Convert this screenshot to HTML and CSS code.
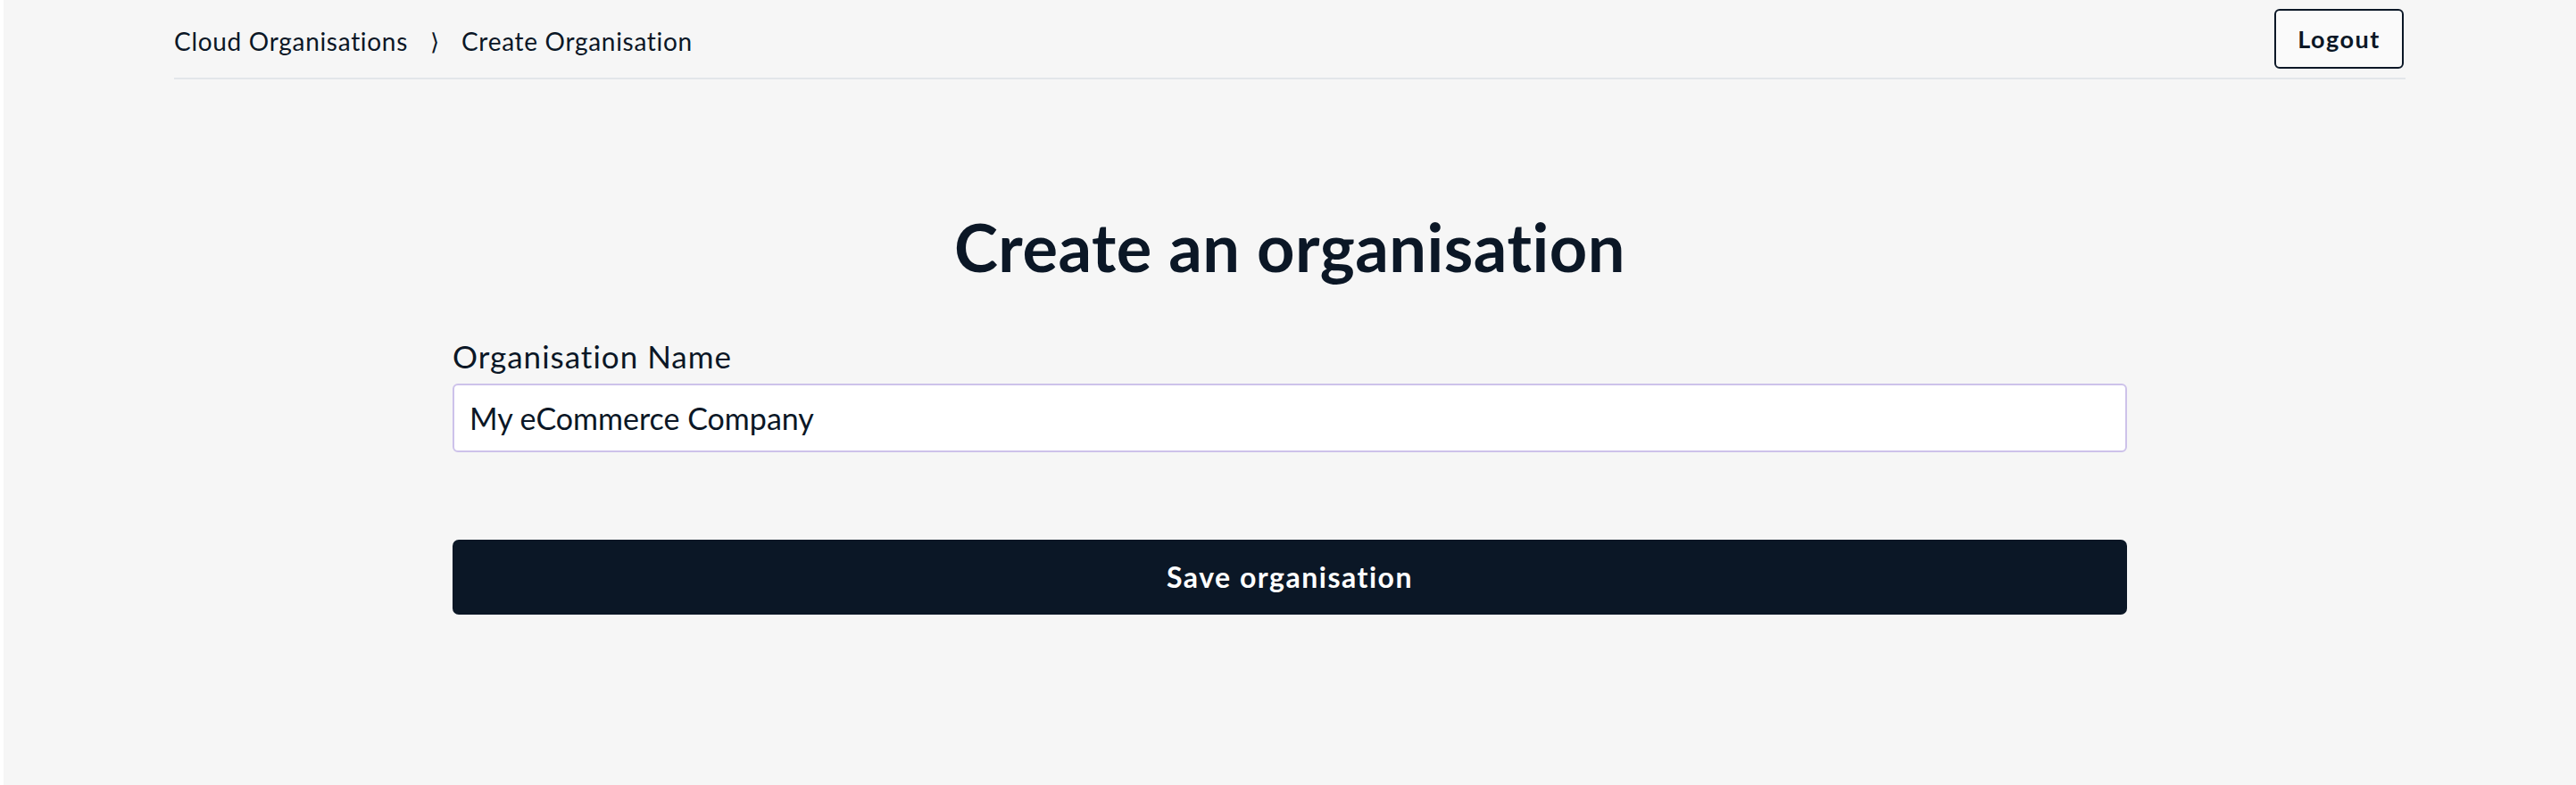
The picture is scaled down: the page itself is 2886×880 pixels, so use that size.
FILE: index.html
```html
<!DOCTYPE html>
<html lang="en">
<head>
<meta charset="utf-8">
<title>Create Organisation</title>
<link rel="stylesheet" href="styles.css">
</head>
<body>
<div class="page">
  <header class="topbar">
    <nav class="crumbs">
      <span class="crumb">Cloud Organisations</span>
      <span class="crumb-sep">⟩</span>
      <span class="crumb">Create Organisation</span>
    </nav>
    <button class="logout" type="button">Logout</button>
  </header>
  <main class="main">
    <h1 class="title">Create an organisation</h1>
    <form class="form">
      <label class="label" for="org">Organisation Name</label>
      <input class="input" id="org" type="text" value="My eCommerce Company">
      <button class="save" type="button">Save organisation</button>
    </form>
  </main>
</div>
</body>
</html>
```

FILE: styles.css
```css
html {
  background: #f6f6f6;
}
body {
  margin: 0;
  min-height: 880px;
  background: #f6f6f6;
  border-left: 4px solid #ffffff;
  font-family: "Lato", "Liberation Sans", sans-serif;
  font-variant-ligatures: none;
  color: #0b1726;
}
.page {
  display: flex;
  flex-direction: column;
  align-items: center;
}
.topbar {
  width: 2500px;
  display: flex;
  justify-content: space-between;
  align-items: center;
  padding: 10px 0;
  border-bottom: 2px solid #e3e6ea;
}
.crumbs {
  display: flex;
  align-items: center;
  gap: 25px;
  font-size: 28px;
  letter-spacing: 0.7px;
  padding-top: 4px;
}
.crumb-sep {
  font-size: 26px;
  letter-spacing: 0;
}
.logout {
  width: 145px;
  height: 67px;
  background: #fafafa;
  border: 2px solid #0b1726;
  border-radius: 6px;
  font-family: "Lato", "Liberation Sans", sans-serif;
  font-variant-ligatures: none;
  font-weight: 700;
  font-size: 27px;
  letter-spacing: 1.5px;
  color: #0b1726;
  padding: 0;
  margin-right: 2px;
}
.main {
  width: 1876px;
  display: flex;
  flex-direction: column;
}
.title {
  margin: 144px 0 0;
  text-align: center;
  font-size: 74px;
  line-height: 1.2;
  font-weight: 700;
  letter-spacing: 0.5px;
}
.form {
  display: flex;
  flex-direction: column;
  margin-top: 56px;
}
.label {
  font-size: 35px;
  line-height: 1.2;
  letter-spacing: 1px;
}
.input {
  margin-top: 10px;
  height: 77px;
  box-sizing: border-box;
  border: 2px solid #cdc2ea;
  border-radius: 6px;
  background: #ffffff;
  padding: 0 17px;
  font-family: "Lato", "Liberation Sans", sans-serif;
  font-variant-ligatures: none;
  font-size: 34px;
  color: #0b1726;
  outline: none;
}
.save {
  margin-top: 98px;
  height: 84px;
  border: 0;
  border-radius: 7px;
  background: #0b1726;
  color: #ffffff;
  font-family: "Lato", "Liberation Sans", sans-serif;
  font-variant-ligatures: none;
  font-weight: 700;
  font-size: 32px;
  letter-spacing: 1.5px;
}
```
